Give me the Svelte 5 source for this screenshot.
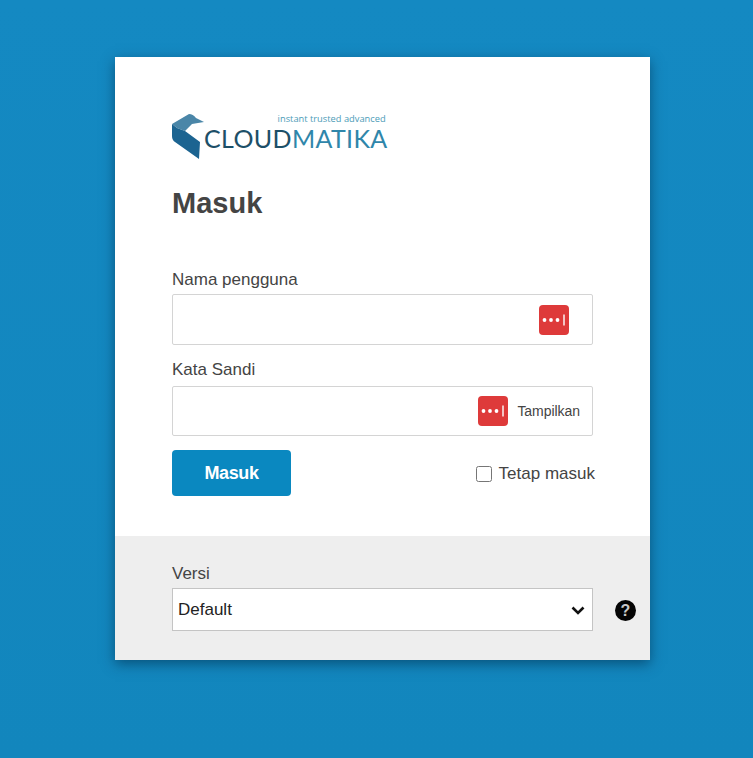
<script>
  let username = $state('');
  let password = $state('');
  let keep = $state(false);
  let version = $state('Default');
</script>

{#snippet keyIcon()}
  <svg class="key" width="30" height="30" viewBox="0 0 30 30" aria-hidden="true">
    <rect width="30" height="30" rx="4" fill="#de3a3a" />
    <circle cx="5.5" cy="15" r="1.9" fill="#fff" />
    <circle cx="12" cy="15" r="1.9" fill="#fff" />
    <circle cx="18.5" cy="15" r="1.9" fill="#fff" />
    <rect x="24" y="9.5" width="2" height="11" fill="#f3c4c4" />
  </svg>
{/snippet}

<main class="page">
  <div class="card">
    <div class="top">
      <div class="logo">
        <svg class="bird" width="33" height="46" viewBox="0 0 33 46" aria-hidden="true">
          <path d="M0 10 L17 0 Q21 0 24 4 L32 8 L20 10 L13 17 L5 14 Z" fill="#4a86a8" />
          <path d="M0 10 L5 14 L13 17 L28 28 L27 45 L3 28 Q0 26 0 22 Z" fill="#1c6491" />
        </svg>
        <div class="wordmark">
          <span class="tagline">instant trusted advanced</span>
          <span class="name"><span class="cloud">CLOUD</span><span class="matika">MATIKA</span></span>
        </div>
      </div>

      <h1>Masuk</h1>

      <label class="field-label" for="username">Nama pengguna</label>
      <div class="input-box first">
        <input id="username" type="text" bind:value={username} />
        <span class="user-key">{@render keyIcon()}</span>
      </div>

      <label class="field-label second" for="password">Kata Sandi</label>
      <div class="input-box">
        <input id="password" type="password" bind:value={password} />
        {@render keyIcon()}
        <span class="show">Tampilkan</span>
      </div>

      <div class="actions">
        <button type="button" class="submit">Masuk</button>
        <label class="keep">
          <input type="checkbox" bind:checked={keep} />
          Tetap masuk
        </label>
      </div>
    </div>

    <div class="bottom">
      <label class="field-label" for="version">Versi</label>
      <div class="version-row">
        <div class="select-box">
          <select id="version" bind:value={version}>
            <option>Default</option>
          </select>
          <svg class="chevron" width="14" height="9" viewBox="0 0 14 9" aria-hidden="true">
            <path d="M1.5 1.5 L7 7 L12.5 1.5" fill="none" stroke="#111" stroke-width="2.6" />
          </svg>
        </div>
        <svg class="help" width="21" height="21" viewBox="0 0 21 21" role="img" aria-label="Bantuan">
          <circle cx="10.5" cy="10.5" r="10.5" fill="#050505" />
          <text x="10.5" y="16" text-anchor="middle">?</text>
        </svg>
      </div>
    </div>
  </div>
</main>

<style>
  :global(body) {
    margin: 0;
    background: #1488c0;
  }

  .page {
    min-height: 758px;
    padding: 57px 0 0 115px;
    box-sizing: border-box;
    font-family: "Liberation Sans", Arial, sans-serif;
    color: #444;
    background: linear-gradient(#1489c2, #1286bd);
  }

  .card {
    width: 535px;
    height: 603px;
    display: flex;
    flex-direction: column;
    background: #fff;
    box-shadow: 0 4px 12px rgba(0, 40, 70, 0.55);
  }

  .top {
    height: 479px;
    padding: 57px 57px 0 57px;
    box-sizing: border-box;
  }

  .logo {
    display: flex;
    align-items: flex-start;
    height: 46px;
  }

  .bird {
    flex: none;
  }

  .wordmark {
    display: flex;
    flex-direction: column;
    align-items: flex-end;
    margin-left: -1px;
  }

  .tagline {
    font-family: "Open Sans", sans-serif;
    font-size: 9.3px;
    line-height: 9px;
    color: #4c9cb8;
    margin-right: 2px;
  }

  .name {
    display: flex;
    font-family: "Lato", sans-serif;
    font-size: 25px;
    line-height: 24px;
    letter-spacing: 0.35px;
    white-space: nowrap;
    margin-top: 3px;
  }

  .cloud {
    color: #1d4f68;
  }

  .matika {
    color: #2f86aa;
  }

  h1 {
    margin: 27px 0 0;
    font-size: 29px;
    line-height: 32px;
    font-weight: 700;
    color: #444;
  }

  .field-label {
    display: block;
    font-size: 17px;
    line-height: 20px;
    color: #444;
    margin-top: 51px;
  }

  .field-label.second {
    margin-top: 15px;
  }

  .input-box {
    display: flex;
    align-items: center;
    height: 50px;
    margin-top: 6px;
    padding-right: 12px;
    box-sizing: border-box;
    border: 1px solid #d4d4d4;
    border-radius: 2px;
    background: #fff;
  }

  .input-box.first {
    height: 51px;
    margin-top: 4px;
  }

  .input-box input {
    flex: 1;
    min-width: 0;
    height: 100%;
    border: 0;
    outline: 0;
    padding: 0 8px;
    background: transparent;
  }

  .user-key {
    display: flex;
    margin-right: 11px;
  }

  .key {
    flex: none;
  }

  .show {
    margin-left: 9px;
    font-size: 14px;
    letter-spacing: -0.05px;
    color: #444;
  }

  .actions {
    display: flex;
    align-items: center;
    justify-content: space-between;
    margin-top: 14px;
  }

  .submit {
    width: 119px;
    height: 46px;
    border: 0;
    border-radius: 4px;
    background: #0a88c0;
    color: #fff;
    font-family: inherit;
    font-size: 18px;
    font-weight: 700;
    letter-spacing: -0.4px;
  }

  .keep {
    display: flex;
    align-items: center;
    gap: 7px;
    margin: 2px -2px 0 0;
    font-size: 17px;
    color: #444;
  }

  .keep input {
    width: 16px;
    height: 16px;
    margin: 0;
  }

  .bottom {
    flex: 1;
    padding: 28px 14px 0 57px;
    background: #eee;
  }

  .bottom .field-label {
    margin-top: 0;
  }

  .version-row {
    display: flex;
    align-items: center;
    gap: 22px;
    margin-top: 4px;
  }

  .select-box {
    position: relative;
    width: 421px;
    height: 43px;
    flex: none;
  }

  select {
    appearance: none;
    width: 100%;
    height: 100%;
    padding: 0 30px 0 5px;
    border: 1px solid #c4c4c4;
    border-radius: 0;
    background: #fff;
    font-family: inherit;
    font-size: 17px;
    color: #222;
  }

  .chevron {
    position: absolute;
    right: 8px;
    top: 18px;
    pointer-events: none;
  }

  .help {
    flex: none;
    margin-top: 2px;
  }

  .help text {
    font-family: "Liberation Sans", Arial, sans-serif;
    font-size: 16px;
    font-weight: 700;
    fill: #c9c9c9;
  }
</style>
